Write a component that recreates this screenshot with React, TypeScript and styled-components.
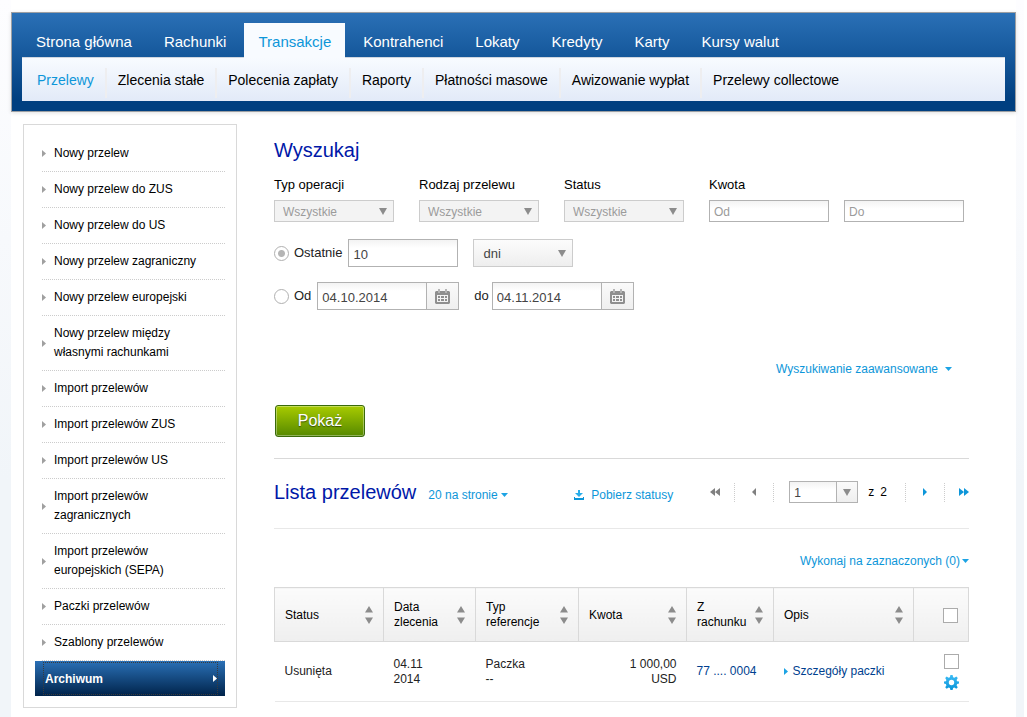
import React from 'react';
import styled, { createGlobalStyle, css } from 'styled-components';

const GlobalStyle = createGlobalStyle`
  * { box-sizing: border-box; }
  body {
    margin: 0;
    background: #fff;
    color: #000;
    font: 12px/16px "Liberation Sans", Arial, sans-serif;
  }
  a { text-decoration: none; color: inherit; }
  ul { list-style: none; margin: 0; padding: 0; }
  input, select, button { font-family: inherit; margin: 0; border-radius: 0; }
  svg { display: block; flex: none; }
`;

const Page = styled.div`
  min-height: 100vh;
  margin-right: 3px;
  padding: 0 8px 0 11px;
  background: linear-gradient(#fdfdff, #f1f5f9 480px);
`;

const Sheet = styled.div`
  min-height: 100vh;
  padding-top: 12px;
  background: #fff;
`;

/* ---------- header ---------- */

const Header = styled.header`
  padding: 10px;
  border: 1px solid #9c9fa3;
  background: linear-gradient(#2a70b6, #003f80 88%);
  box-shadow: 0 1px 4px rgba(0, 0, 0, 0.12);
`;

const Tabs = styled.nav`
  display: flex;
  gap: 4px;
  height: 34px;
`;

const Tab = styled.a<{ $active?: boolean }>`
  height: 35px;
  padding: 0 14px;
  font-size: 15px;
  line-height: 37px;
  white-space: nowrap;
  color: ${p => (p.$active ? '#0d96d9' : '#fff')};
  ${p => p.$active && 'position: relative; background: #f8fbff;'}
`;

const SubNav = styled.nav`
  display: flex;
  align-items: flex-end;
  height: 44px;
  padding: 0 0 3px 4px;
  border-top: 1px solid #cfd6e0;
  background: linear-gradient(#f8fbff, #e2eaf8);
`;

const SubLink = styled.a<{ $active?: boolean }>`
  height: 30px;
  padding: 0 11px;
  border-right: 2px solid #eeeef0;
  font-size: 14px;
  line-height: 24px;
  white-space: nowrap;
  color: ${p => (p.$active ? '#0d96d9' : '#000')};
  &:last-child { border-right: 0; }
`;

/* ---------- body ---------- */

const Columns = styled.div`
  display: flex;
  align-items: flex-start;
  gap: 37px;
  padding: 12px 47px 0 12px;
`;

const Side = styled.nav`
  flex: 0 0 214px;
  padding: 11px;
  border: 1px solid #d9d9d9;
`;

const SideItem = styled.li`
  margin-left: 7px;
  border-bottom: 1px dotted #ccc;
`;

const SideLink = styled.a`
  display: flex;
  align-items: center;
  gap: 8px;
  padding: 8px 20px 8px 0;
  line-height: 19px;
`;

const SideCurrent = styled.a`
  display: flex;
  height: 35px;
  padding: 1px 7px 1px 8px;
  background: linear-gradient(#2a70b6, #00234a);
  color: #fff;
  font-weight: bold;
  span {
    display: flex;
    flex: 1;
    justify-content: space-between;
    align-items: center;
    padding-left: 1px;
    border: 1px dotted #3b3b3b;
  }
`;

const Main = styled.main`
  flex: 1;
  min-width: 0;
  padding-top: 14px;
`;

const Title = styled.h2`
  margin: 0;
  color: #0018a8;
  font-size: 20px;
  font-weight: normal;
  line-height: 24px;
  white-space: nowrap;
`;

const Filters = styled.div`
  display: flex;
  gap: 25px;
  margin-top: 15px;
`;

const Field = styled.div`
  display: flex;
  flex-direction: column;
  gap: 7px;
`;

const Label = styled.label`
  font-size: 13px;
  line-height: 16px;
`;

const Line = styled.div<{ $top: number }>`
  display: flex;
  align-items: center;
  margin-top: ${p => p.$top}px;
`;

const Pair = styled.div`
  display: flex;
  gap: 15px;
`;

const SelectBox = styled.div<{ $w: number }>`
  position: relative;
  display: flex;
  align-items: center;
  width: ${p => p.$w}px;
  svg {
    position: absolute;
    right: 7px;
    pointer-events: none;
  }
`;

const Select = styled.select<{ $tall?: boolean }>`
  appearance: none;
  display: block;
  width: 100%;
  height: ${p => (p.$tall ? 28 : 22)}px;
  padding: ${p => (p.$tall ? '0 9px' : '2px 8px 0')};
  border: 1px solid #ccc;
  background: ${p => (p.$tall ? 'linear-gradient(#fcfcfc, #eee)' : '#f3f3f3')};
  color: ${p => (p.$tall ? '#444' : '#9b9b9b')};
  font-size: ${p => (p.$tall ? 13 : 12)}px;
  opacity: 1;
`;

const Input = styled.input<{ $w: number; $tall?: boolean }>`
  width: ${p => p.$w}px;
  height: ${p => (p.$tall ? 28 : 22)}px;
  padding: ${p => (p.$tall ? '2px 4px 0' : '1px 4px 0')};
  border: 1px solid #b2b2b2;
  background: linear-gradient(#f3f3f3, #fff 8px);
  color: #444;
  font-size: ${p => (p.$tall ? 13 : 12)}px;
  &::placeholder { color: #9b9b9b; opacity: 1; }
`;

const Radio = styled.input`
  appearance: none;
  width: 15px;
  height: 15px;
  border: 1px solid #b0b0b0;
  && { border-radius: 50%; }
  background: #fff;
  &:checked { background: radial-gradient(circle, #b5b5b5 3px, #fff 4px); }
`;

const RadioLabel = styled.label`
  display: flex;
  align-items: center;
  gap: 5px;
  margin-right: 6px;
  color: #222;
  font-size: 13px;
  line-height: 18px;
`;

const Between = styled.span`
  margin-right: 3px;
  color: #222;
  font-size: 13px;
  line-height: 18px;
`;

const DateField = styled.div`
  display: flex;
`;

const AddOn = styled.button<{ $w: number }>`
  display: grid;
  place-items: center;
  width: ${p => p.$w}px;
  padding: 0;
  border: 1px solid #b2b2b2;
  border-left: 0;
  background: linear-gradient(#fafafa, #efefef);
`;

const linkStyle = css`
  display: inline-flex;
  align-items: center;
  padding: 0;
  border: 0;
  background: none;
  color: #0d96d9;
  font-size: 12px;
  line-height: 16px;
  white-space: nowrap;
`;

const LinkButton = styled.button<{ $gap: number }>`
  ${linkStyle}
  gap: ${p => p.$gap}px;
`;

const TextLink = styled.a`
  ${linkStyle}
  gap: 7px;
`;

const Right = styled.div<{ $top: number; $end?: number }>`
  display: flex;
  justify-content: flex-end;
  margin-top: ${p => p.$top}px;
  padding-right: ${p => p.$end ?? 0}px;
`;

const Submit = styled.button`
  display: block;
  width: 90px;
  height: 32px;
  && { margin: 28px 0 21px 1px; border-radius: 3px; }
  padding: 0;
  border: 1px solid #3a6a0a;
  background: linear-gradient(#a8cb00, #568900);
  box-shadow: inset 0 0 0 1px rgba(255, 255, 255, 0.35);
  color: #fff;
  font-size: 16px;
  text-shadow: 0 1px 1px rgba(0, 0, 0, 0.5);
`;

const ListBar = styled.div`
  display: flex;
  align-items: center;
  height: 71px;
  padding-bottom: 3px;
  border-top: 1px solid #d9d9d9;
  border-bottom: 1px solid #e8e8e8;
`;

const ListTools = styled.div`
  display: flex;
  flex: 1;
  max-width: 257px;
  justify-content: space-between;
  padding: 5px 0 0 12px;
`;

const Pager = styled.div`
  display: flex;
  align-items: center;
  margin-left: auto;
`;

const PageStep = styled.button<{ $w: number; $side?: 'left' | 'right' }>`
  display: flex;
  align-items: center;
  justify-content: ${p => (p.$side === 'left' ? 'flex-start' : p.$side === 'right' ? 'flex-end' : 'center')};
  width: ${p => p.$w}px;
  height: 19px;
  padding: 0;
  border: 0;
  background: none;
`;

const Dots = styled.span`
  height: 19px;
  border-left: 1px dotted #ccc;
`;

const PageChoice = styled.div`
  display: flex;
  margin: 0 10px 0 15px;
`;

const Total = styled.span`
  display: flex;
  gap: 6px;
  margin-right: 18px;
`;

/* ---------- table ---------- */

const Table = styled.table`
  width: 100%;
  margin-top: 18px;
  border-collapse: collapse;
  table-layout: fixed;
  line-height: 15px;
`;

const Th = styled.th`
  height: 54px;
  padding: 1px 10px 0;
  border: 1px solid #d9d9d9;
  background: linear-gradient(#fbfbfb, #efefef);
  font-weight: normal;
  text-align: left;
`;

const ThBody = styled.div`
  display: flex;
  align-items: center;
  justify-content: space-between;
`;

const Td = styled.td<{ $right?: boolean }>`
  height: 60px;
  padding: 0 10px;
  border-bottom: 1px solid #e8e8e8;
  color: #222;
  text-align: ${p => (p.$right ? 'right' : 'left')};
`;

const AccountLink = styled.a`
  display: inline-flex;
  align-items: center;
  gap: 5px;
  color: #003f8f;
  white-space: nowrap;
`;

const Check = styled.input`
  appearance: none;
  display: block;
  width: 15px;
  height: 15px;
  border: 1px solid #ababab;
  background: #fff;
`;

const RowTools = styled.div`
  display: flex;
  flex-direction: column;
  align-items: flex-end;
  gap: 6px;
`;

const IconButton = styled.button`
  padding: 0;
  border: 0;
  background: none;
`;

/* ---------- icons ---------- */

const Arrow = ({ dir, w, h, color }: { dir: 'right' | 'left' | 'down'; w: number; h: number; color: string }) => {
  const points = {
    right: `0,0 ${w},${h / 2} 0,${h}`,
    left: `${w},0 0,${h / 2} ${w},${h}`,
    down: `0,0 ${w},0 ${w / 2},${h}`,
  }[dir];
  return (
    <svg width={w} height={h} viewBox={`0 0 ${w} ${h}`} aria-hidden="true">
      <polygon points={points} fill={color} />
    </svg>
  );
};

const DoubleArrow = ({ dir, color }: { dir: 'left' | 'right'; color: string }) => (
  <svg width="10" height="8" viewBox="0 0 10 8" aria-hidden="true">
    <path fill={color} d={dir === 'left' ? 'M5 0v8L0 4zM10 0v8L5 4z' : 'M0 0v8l5-4zM5 0v8l5-4z'} />
  </svg>
);

const SortIcon = () => (
  <svg width="8" height="18" viewBox="0 0 8 18" aria-hidden="true">
    <path fill="#8c8c8c" d="M4 0l4 6.500H0zM4 18l4-6.500H0z" />
  </svg>
);

const CalendarIcon = () => (
  <svg width="15" height="15" viewBox="0 0 15 15" aria-hidden="true">
    <path fill="#8f8f8f" fillRule="evenodd" d="M1 2h13l1 1v11l-1 1H1l-1-1V3zM2 6v7h11V6z" />
    <path fill="#b5b5b5" d="M3 0h2v4H3zM10 0h2v4h-2z" />
    <path fill="#8f8f8f" d="M3 7h2v2H3zM6 7h3v2H6zM10 7h2v2h-2zM3 10h2v2H3zM6 10h3v2H6zM10 10h2v2h-2z" />
  </svg>
);

const DownloadIcon = () => (
  <svg width="10" height="10" viewBox="0 0 10 10" aria-hidden="true">
    <path fill="#2aaeea" d="M4 0h2v3h3L5 7 1 3h3z" />
    <path fill="#0d96d9" d="M0 7h1v1h8V7h1v3H0z" />
  </svg>
);

const GearIcon = () => (
  <svg width="15" height="15" viewBox="0 0 15 15" aria-hidden="true">
    <defs>
      <linearGradient id="gear" x1="0" y1="0" x2="0" y2="1">
        <stop offset="0" stopColor="#3cbcf5" />
        <stop offset="1" stopColor="#0a94d8" />
      </linearGradient>
    </defs>
    <path
      fill="url(#gear)"
      fillRule="evenodd"
      d="M6.400 0h2.200l.5 2.200 1.300.5 1.900-1.200 1.500 1.500-1.200 1.900.5 1.300 1.900.4v2l-1.900.5-.5 1.300 1.200 1.900-1.500 1.500-1.900-1.200-1.300.5L8.600 15H6.400l-.5-1.900-1.300-.5-1.900 1.200-1.500-1.500 1.200-1.900-.5-1.300L0 8.600v-2l1.900-.4.5-1.300L1.200 3l1.500-1.500 1.900 1.200 1.300-.5zM7.500 4.800a2.700 2.700 0 1 0 0 5.400 2.700 2.700 0 0 0 0-5.400z"
    />
  </svg>
);

/* ---------- data ---------- */

const tabs = ['Strona główna', 'Rachunki', 'Transakcje', 'Kontrahenci', 'Lokaty', 'Kredyty', 'Karty', 'Kursy walut'];
const subLinks = ['Przelewy', 'Zlecenia stałe', 'Polecenia zapłaty', 'Raporty', 'Płatności masowe', 'Awizowanie wypłat', 'Przelewy collectowe'];
const sideLinks = [
  'Nowy przelew',
  'Nowy przelew do ZUS',
  'Nowy przelew do US',
  'Nowy przelew zagraniczny',
  'Nowy przelew europejski',
  'Nowy przelew między własnymi rachunkami',
  'Import przelewów',
  'Import przelewów ZUS',
  'Import przelewów US',
  'Import przelewów zagranicznych',
  'Import przelewów europejskich (SEPA)',
  'Paczki przelewów',
  'Szablony przelewów',
];
const filters = [
  { id: 'typ', label: 'Typ operacji' },
  { id: 'rodzaj', label: 'Rodzaj przelewu' },
  { id: 'status', label: 'Status' },
];
const columns: { title: React.ReactNode; key: string; width?: number }[] = [
  { key: 'status', title: 'Status', width: 109 },
  { key: 'data', title: <>Data<br />zlecenia</>, width: 92 },
  { key: 'typ', title: <>Typ<br />referencje</>, width: 103 },
  { key: 'kwota', title: 'Kwota', width: 108 },
  { key: 'rachunek', title: <>Z<br />rachunku</>, width: 87 },
  { key: 'opis', title: 'Opis' },
];

const DateInput = ({ label, value }: { label: string; value: string }) => (
  <DateField>
    <Input $w={110} $tall aria-label={label} defaultValue={value} />
    <AddOn $w={32} type="button" aria-label="Kalendarz">
      <CalendarIcon />
    </AddOn>
  </DateField>
);

export default function App() {
  return (
    <Page>
      <GlobalStyle />
      <Sheet>
        <Header>
          <Tabs>
            {tabs.map(t => (
              <Tab key={t} href="#" $active={t === 'Transakcje'}>{t}</Tab>
            ))}
          </Tabs>
          <SubNav>
            {subLinks.map(t => (
              <SubLink key={t} href="#" $active={t === 'Przelewy'}>{t}</SubLink>
            ))}
          </SubNav>
        </Header>

        <Columns>
          <Side>
            <ul>
              {sideLinks.map(t => (
                <SideItem key={t}>
                  <SideLink href="#">
                    <Arrow dir="right" w={4} h={7} color="#a0a0a0" />
                    {t}
                  </SideLink>
                </SideItem>
              ))}
              <li>
                <SideCurrent href="#" aria-current="page">
                  <span>
                    Archiwum
                    <Arrow dir="right" w={4} h={7} color="#fff" />
                  </span>
                </SideCurrent>
              </li>
            </ul>
          </Side>

          <Main>
            <Title>Wyszukaj</Title>
            <Filters>
              {filters.map(f => (
                <Field key={f.id}>
                  <Label htmlFor={f.id}>{f.label}</Label>
                  <SelectBox $w={120}>
                    <Select id={f.id} disabled>
                      <option>Wszystkie</option>
                    </Select>
                    <Arrow dir="down" w={8} h={7} color="#8c8c8c" />
                  </SelectBox>
                </Field>
              ))}
              <Field>
                <Label htmlFor="kwota-od">Kwota</Label>
                <Pair>
                  <Input $w={120} id="kwota-od" placeholder="Od" />
                  <Input $w={120} aria-label="Kwota do" placeholder="Do" />
                </Pair>
              </Field>
            </Filters>

            <Line $top={17}>
              <RadioLabel>
                <Radio type="radio" name="okres" defaultChecked />
                Ostatnie
              </RadioLabel>
              <Pair>
                <Input $w={110} $tall aria-label="Liczba" defaultValue="10" />
                <SelectBox $w={100}>
                  <Select $tall aria-label="Jednostka">
                    <option>dni</option>
                  </Select>
                  <Arrow dir="down" w={8} h={7} color="#8c8c8c" />
                </SelectBox>
              </Pair>
            </Line>

            <Line $top={15}>
              <RadioLabel>
                <Radio type="radio" name="okres" />
                Od
              </RadioLabel>
              <Pair>
                <DateInput label="Data od" value="04.10.2014" />
                <Line $top={0}>
                  <Between>do</Between>
                  <DateInput label="Data do" value="04.11.2014" />
                </Line>
              </Pair>
            </Line>

            <Right $top={51} $end={17}>
              <LinkButton $gap={7} type="button">
                Wyszukiwanie zaawansowane
                <Arrow dir="down" w={7} h={4} color="#1ca3e4" />
              </LinkButton>
            </Right>

            <Submit type="button">Pokaż</Submit>

            <ListBar>
              <Title>Lista przelewów</Title>
              <ListTools>
                <LinkButton $gap={3} type="button">
                  20 na stronie
                  <Arrow dir="down" w={7} h={4} color="#1ca3e4" />
                </LinkButton>
                <TextLink href="#">
                  <DownloadIcon />
                  Pobierz statusy
                </TextLink>
              </ListTools>
              <Pager>
                <PageStep $w={24} $side="left" type="button" aria-label="Pierwsza">
                  <DoubleArrow dir="left" color="#808080" />
                </PageStep>
                <Dots />
                <PageStep $w={38} type="button" aria-label="Poprzednia">
                  <Arrow dir="left" w={4} h={8} color="#808080" />
                </PageStep>
                <Dots />
                <PageChoice>
                  <Input $w={48} aria-label="Strona" defaultValue="1" />
                  <AddOn $w={21} type="button" aria-label="Wybierz stronę">
                    <Arrow dir="down" w={8} h={7} color="#8c8c8c" />
                  </AddOn>
                </PageChoice>
                <Total>
                  <span>z</span>
                  <span>2</span>
                </Total>
                <Dots />
                <PageStep $w={38} type="button" aria-label="Następna">
                  <Arrow dir="right" w={4} h={8} color="#0d96d9" />
                </PageStep>
                <Dots />
                <PageStep $w={24} $side="right" type="button" aria-label="Ostatnia">
                  <DoubleArrow dir="right" color="#0d96d9" />
                </PageStep>
              </Pager>
            </ListBar>

            <Right $top={24}>
              <LinkButton $gap={2} type="button">
                Wykonaj na zaznaczonych (0)
                <Arrow dir="down" w={7} h={4} color="#1ca3e4" />
              </LinkButton>
            </Right>

            <Table>
              <colgroup>
                {columns.map(c => (
                  <col key={c.key} width={c.width} />
                ))}
                <col width={55} />
              </colgroup>
              <thead>
                <tr>
                  {columns.map(c => (
                    <Th key={c.key} scope="col">
                      <ThBody>
                        <span>{c.title}</span>
                        <SortIcon />
                      </ThBody>
                    </Th>
                  ))}
                  <Th scope="col">
                    <RowTools>
                      <Check type="checkbox" aria-label="Zaznacz wszystkie" />
                    </RowTools>
                  </Th>
                </tr>
              </thead>
              <tbody>
                <tr>
                  <Td>Usunięta</Td>
                  <Td>04.11<br />2014</Td>
                  <Td>Paczka<br />--</Td>
                  <Td $right>1 000,00<br />USD</Td>
                  <Td><AccountLink href="#">77 .... 0004</AccountLink></Td>
                  <Td>
                    <AccountLink href="#">
                      <Arrow dir="right" w={4} h={7} color="#1ca3e4" />
                      Szczegóły paczki
                    </AccountLink>
                  </Td>
                  <Td>
                    <RowTools>
                      <Check type="checkbox" aria-label="Zaznacz przelew" />
                      <IconButton type="button" aria-label="Opcje">
                        <GearIcon />
                      </IconButton>
                    </RowTools>
                  </Td>
                </tr>
              </tbody>
            </Table>
          </Main>
        </Columns>
      </Sheet>
    </Page>
  );
}
